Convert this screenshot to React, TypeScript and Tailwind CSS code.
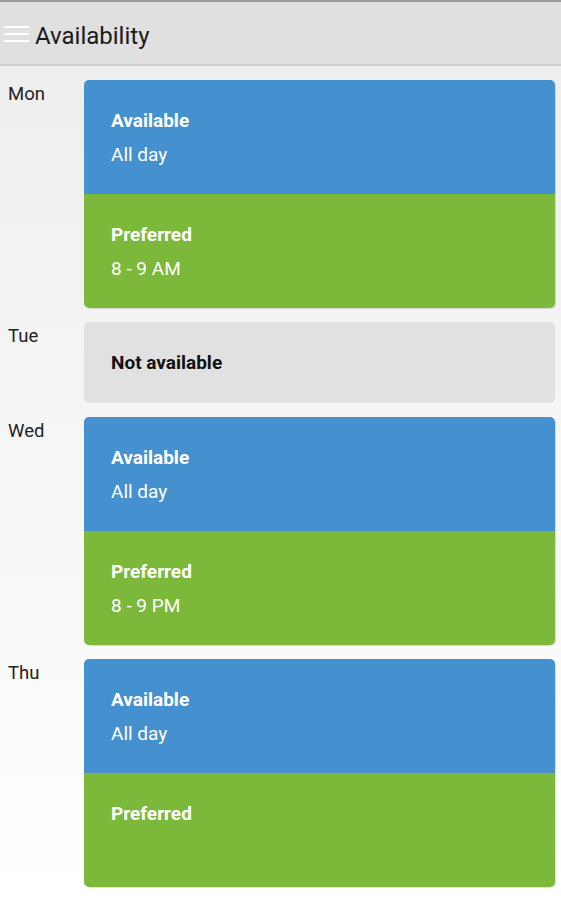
const days = [
  {
    day: 'Mon',
    slots: [
      { kind: 'available', title: 'Available', detail: 'All day' },
      { kind: 'preferred', title: 'Preferred', detail: '8 - 9 AM' },
    ],
  },
  { day: 'Tue', slots: [] },
  {
    day: 'Wed',
    slots: [
      { kind: 'available', title: 'Available', detail: 'All day' },
      { kind: 'preferred', title: 'Preferred', detail: '8 - 9 PM' },
    ],
  },
  {
    day: 'Thu',
    slots: [
      { kind: 'available', title: 'Available', detail: 'All day' },
      { kind: 'preferred', title: 'Preferred', detail: '' },
    ],
  },
];

export default function App() {
  return (
    <div className="h-[900px] w-[561px] overflow-hidden bg-gradient-to-b from-[#ededed] to-[#ffffff] font-['Roboto',sans-serif]">
      <header className="flex h-[66px] items-center border-t-2 border-b-2 border-t-[#9a9a9a] border-b-[#cfcfcf] bg-[#e0e0e0] pl-[4px]">
        <div className="mt-[2px] flex w-[25px] flex-col gap-[5px]">
          <span className="h-[2px] w-full bg-white" />
          <span className="h-[2px] w-full bg-white" />
          <span className="h-[2px] w-full bg-white" />
        </div>
        <h1 className="mt-[5px] ml-[6px] text-[24px] text-[#1a1a1a]">Availability</h1>
      </header>

      <main className="flex flex-col gap-[14px] pt-[14px] pr-[6px]">
        {days.map((d) => (
          <div key={d.day} className="flex">
            <div className="w-[84px] pl-[8px] pt-[1px] text-[18.5px] text-[#222]">{d.day}</div>
            {d.slots.length === 0 ? (
              <div className="flex h-[81px] flex-1 items-center rounded-[5px] bg-[#e1e1e1] pl-[27px] pt-[2px] text-[19px] font-bold text-[#111]">
                Not available
              </div>
            ) : (
              <div className="flex flex-1 flex-col overflow-hidden rounded-[5px] shadow-[1px_1px_0_rgba(0,0,0,0.12)]">
                {d.slots.map((s) => (
                  <div
                    key={s.kind}
                    className={`flex h-[114px] flex-col pl-[27px] pt-[28px] text-white ${
                      s.kind === 'available' ? 'bg-[#4590cf]' : 'bg-[#7cb83a]'
                    }`}
                  >
                    <div className="text-[19px] font-bold leading-[26px]">{s.title}</div>
                    <div className="mt-[8px] text-[19px] leading-[26px]">{s.detail}</div>
                  </div>
                ))}
              </div>
            )}
          </div>
        ))}
      </main>
    </div>
  );
}
